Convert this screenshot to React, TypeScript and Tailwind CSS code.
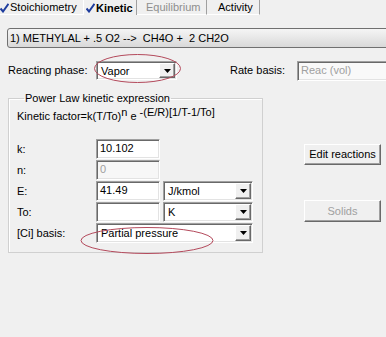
import React from 'react';

const sunken =
  'border border-t-[#a0a0a0] border-l-[#a0a0a0] border-b-white border-r-white shadow-[inset_1px_1px_0_#696969,inset_-1px_-1px_0_#e3e3e3]';
const raised =
  'border border-t-white border-l-white border-b-[#696969] border-r-[#696969] shadow-[inset_-1px_-1px_0_#a0a0a0] bg-[#f0f0f0]';

function Check() {
  return (
    <svg width="9" height="10" viewBox="0 0 9 10" className="mr-[1px] shrink-0">
      <path d="M0.5 5.5 L3 8.5 L8.5 0.8" fill="none" stroke="#1f3d9e" strokeWidth="2" />
    </svg>
  );
}

function Arrow() {
  return (
    <div className={`${raised} flex h-full w-[16px] shrink-0 items-center justify-center`}>
      <svg width="7" height="4" viewBox="0 0 7 4">
        <polygon points="0,0 7,0 3.5,4" fill="#000" />
      </svg>
    </div>
  );
}

function Select({ value, width }: { value: string; width: string }) {
  return (
    <div className={`${sunken} flex shrink-0 items-stretch bg-white p-[1px] ${width}`}>
      <span className="flex-1 truncate pl-[3px] leading-[16px]">{value}</span>
      <Arrow />
    </div>
  );
}

function Field({ value, disabled }: { value: string; disabled?: boolean }) {
  return (
    <div
      className={`${sunken} h-[20px] w-[64px] shrink-0 pl-[3px] leading-[17px] ${
        disabled ? 'bg-[#f7f7f7] text-[#a0a0a0]' : 'bg-white'
      }`}
    >
      {value}
    </div>
  );
}

function Row({ label, children }: { label: string; children: React.ReactNode }) {
  return (
    <div className="flex h-[20px] items-center">
      <span className="w-[79px] shrink-0">{label}</span>
      {children}
    </div>
  );
}

export default function App() {
  return (
    <div className="relative h-[337px] w-[386px] overflow-hidden bg-[#f0f0f0] font-['Liberation_Sans',Arial,sans-serif] text-[11px] leading-[13px] text-black">
      {/* tabs */}
      <div className="flex h-[15px] items-stretch">
        <div className="flex w-[83px] items-center border-b border-white pt-[1px]">
          <Check />
          Stoichiometry
        </div>
        <div className="flex w-[54px] items-center border-r border-l border-r-[#a0a0a0] border-l-white pl-[2px] pt-[1px] font-bold">
          <Check />
          Kinetic
        </div>
        <div className="flex w-[70px] items-center border-r border-b border-r-[#a0a0a0] border-b-white pl-[9px] pt-[1px] text-[#8e8e8e]">
          Equilibrium
        </div>
        <div className="flex w-[53px] items-center border-r border-b border-r-[#a0a0a0] border-b-white pl-[11px] pt-[1px]">
          Activity
        </div>
      </div>

      {/* reaction combo */}
      <div className="ml-[7px] mt-[13px] flex h-[20px] w-[400px] items-center whitespace-pre rounded-[3px] border border-[#707070] bg-linear-to-b from-[#f5f5f5] to-[#d9d9d9] pl-[2px]">
        {'1) METHYLAL + .5 O2 -->  CH4O +  2 CH2O'}
      </div>

      {/* phase row */}
      <div className="mt-[13px] flex h-[19px] items-center">
        <span className="w-[96px] shrink-0 pl-[8px]">Reacting phase:</span>
        <Select value="Vapor" width="w-[81px] h-[19px]" />
        <span className="ml-[53px] w-[67px] shrink-0">Rate basis:</span>
        <div className={`${sunken} h-[20px] w-[100px] shrink-0 bg-[#f9f9f9] pl-[3px] leading-[17px] text-[#a0a0a0]`}>
          Reac (vol)
        </div>
      </div>

      <div className="mt-[12px] flex items-start">
        <fieldset className="ml-[8px] w-[255px] shrink-0 border border-[#d0d0d0] pb-[9px] pl-[8px] shadow-[inset_1px_1px_0_#fff]">
          <legend className="ml-[7px] px-[1px] leading-[13px]">Power Law kinetic expression</legend>
          <div className="mt-[5px] h-[13px] whitespace-pre">
            Kinetic factor=k(T/To)<sup className="-top-[4px] text-[11px]">n</sup> e{' '}
            <sup className="-top-[4px] text-[11px]">-(E/R)[1/T-1/To]</sup>
          </div>
          <div className="mt-[16px] flex flex-col gap-[1px]">
            <Row label="k:">
              <Field value="10.102" />
            </Row>
            <Row label="n:">
              <Field value="0" disabled />
            </Row>
            <Row label="E:">
              <Field value="41.49" />
              <div className="ml-[3px]">
                <Select value="J/kmol" width="w-[90px] h-[20px]" />
              </div>
            </Row>
            <Row label="To:">
              <Field value="" />
              <div className="ml-[3px]">
                <Select value="K" width="w-[90px] h-[20px]" />
              </div>
            </Row>
            <Row label="[Ci] basis:">
              <Select value="Partial pressure" width="w-[157px] h-[20px]" />
            </Row>
          </div>
        </fieldset>

        <div className="ml-[41px] flex w-[77px] shrink-0 flex-col">
          <button className={`${raised} mt-[52px] h-[21px] w-full text-[11px]`}>Edit reactions</button>
          <button className={`${raised} mt-[35px] h-[22px] w-full text-[11px] text-[#a0a0a0]`}>Solids</button>
        </div>
      </div>

      {/* red annotation ellipses */}
      <svg className="pointer-events-none absolute left-0 top-0" width="386" height="337">
        <ellipse cx="137.5" cy="68.5" rx="43" ry="14" fill="none" stroke="#b44a5c" strokeWidth="1" />
        <ellipse cx="147" cy="240.5" rx="66" ry="13" fill="none" stroke="#b44a5c" strokeWidth="1" />
      </svg>
    </div>
  );
}
